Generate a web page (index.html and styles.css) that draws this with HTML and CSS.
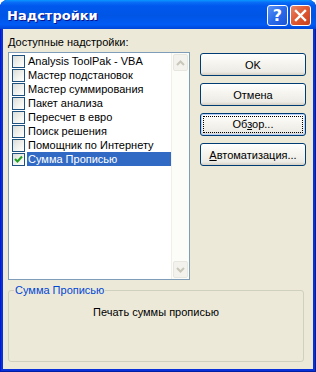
FILE: index.html
```html
<!DOCTYPE html>
<html lang="ru">
<head>
    <meta charset="UTF-8">
    <title>Надстройки</title>
    <link rel="stylesheet" href="styles.css">
</head>
<body>
    <div class="window">
        <div class="titlebar">
            <span class="title">Надстройки</span>
            <div class="title-buttons">
                <button class="tb-btn tb-help">?</button>
                <button class="tb-btn tb-close">
                    <svg width="13" height="13" viewBox="0 0 13 13">
                        <path d="M2 2 L11 11 M11 2 L2 11" stroke="#fff" stroke-width="2.4" stroke-linecap="square"/>
                    </svg>
                </button>
            </div>
        </div>

        <div class="client">
            <div class="caption"><u>Д</u>оступные надстройки:</div>

            <div class="main">
                <div class="listbox">
                    <ul class="items">
                        <li class="item"><span class="check"></span><span class="name">Analysis ToolPak - VBA</span></li>
                        <li class="item"><span class="check"></span><span class="name">Мастер подстановок</span></li>
                        <li class="item"><span class="check"></span><span class="name">Мастер суммирования</span></li>
                        <li class="item"><span class="check"></span><span class="name">Пакет анализа</span></li>
                        <li class="item"><span class="check"></span><span class="name">Пересчет в евро</span></li>
                        <li class="item"><span class="check"></span><span class="name">Поиск решения</span></li>
                        <li class="item"><span class="check"></span><span class="name">Помощник по Интернету</span></li>
                        <li class="item selected">
                            <span class="check">
                                <svg width="11" height="11" viewBox="0 0 11 11">
                                    <path d="M2 5 L4.5 7.5 L9 2.5" fill="none" stroke="#21a121" stroke-width="2"/>
                                </svg>
                            </span>
                            <span class="name">Сумма Прописью</span>
                        </li>
                    </ul>
                    <div class="scrollbar">
                        <div class="sb-btn">
                            <svg width="9" height="6" viewBox="0 0 9 6"><path d="M1 5 L4.5 1.5 L8 5" fill="none" stroke="#c9c7ba" stroke-width="2"/></svg>
                        </div>
                        <div class="sb-track"></div>
                        <div class="sb-btn">
                            <svg width="9" height="6" viewBox="0 0 9 6"><path d="M1 1 L4.5 4.5 L8 1" fill="none" stroke="#c9c7ba" stroke-width="2"/></svg>
                        </div>
                    </div>
                </div>

                <div class="actions">
                    <button class="btn">OK</button>
                    <button class="btn">Отмена</button>
                    <button class="btn focused"><span class="focus">Об<u>з</u>ор...</span></button>
                    <button class="btn"><u>А</u>втоматизация...</button>
                </div>
            </div>

            <fieldset class="group">
                <legend>Сумма Прописью</legend>
                <div class="description">Печать суммы прописью</div>
            </fieldset>
        </div>
    </div>
</body>
</html>
```

FILE: styles.css
```css
body {
    margin: 0;
    font-family: "Liberation Sans", Arial, sans-serif;
    font-size: 11px;
}
.window {
    width: 316px;
    height: 372px;
    display: flex;
    flex-direction: column;
    background: #0831d9;
    border-radius: 8px 8px 0 0;
    box-sizing: border-box;
    padding: 0 3px 3px 3px;
    box-shadow: inset 1px 0 #0019cf, inset -1px 0 #001ea0, inset 0 -1px #001ea0;
}
.titlebar {
    height: 29px;
    margin: 0 -3px;
    padding: 0 5px 0 7px;
    display: flex;
    align-items: center;
    justify-content: space-between;
    border-radius: 7px 7px 0 0;
    background: linear-gradient(to bottom, #0997ff 0%, #0a6ef8 8%, #0058ee 20%, #0055e5 55%, #005bf5 85%, #0045d8 100%);
}
.title {
    color: #fff;
    font: bold 13px "DejaVu Sans", sans-serif;
    text-shadow: 1px 1px #0f1089;
    padding-top: 1px;
}
.title-buttons {
    display: flex;
    gap: 2px;
    padding-top: 2px;
}
.tb-btn {
    width: 21px;
    height: 21px;
    padding: 0;
    border: 1px solid #fff;
    border-radius: 3px;
    display: flex;
    align-items: center;
    justify-content: center;
}
.tb-help {
    background: linear-gradient(135deg, #5d93f5 0%, #2a6aea 50%, #1b54d8 100%);
    color: #fff;
    font: bold 16px "DejaVu Sans", sans-serif;
}
.tb-close {
    background: linear-gradient(135deg, #e8856a 0%, #e05a33 45%, #c9401c 100%);
}
.client {
    flex: 1;
    background: #ece9d8;
    padding: 7px 7px 0 5px;
}
.caption {
    line-height: 13px;
}
.main {
    display: flex;
    gap: 10px;
    margin-top: 3px;
}
.listbox {
    width: 182px;
    height: 228px;
    box-sizing: border-box;
    border: 1px solid #7f9db9;
    background: #fff;
    display: flex;
}
.items {
    flex: 1;
    list-style: none;
    margin: 0;
    padding: 1px 0 0 0;
}
.item {
    height: 14px;
    display: flex;
    align-items: center;
    padding-left: 3px;
}
.check {
    width: 11px;
    height: 11px;
    border: 1px solid #1c5180;
    background: linear-gradient(135deg, #dcdcd7 0%, #f3f3f0 60%, #fff 100%);
    display: flex;
    align-items: center;
    justify-content: center;
    flex-shrink: 0;
}
.name {
    margin-left: 2px;
    padding: 0 1px;
    line-height: 14px;
    white-space: nowrap;
}
.selected .name {
    flex: 1;
    background: #316ac5;
    color: #fff;
}
.scrollbar {
    width: 17px;
    display: flex;
    flex-direction: column;
    background: #fcfcf9;
    border-left: 1px solid #f0efe8;
}
.sb-btn {
    height: 15px;
    margin: 1px;
    border: 1px solid #e8e7df;
    border-radius: 2px;
    background: #f3f2ec;
    display: flex;
    align-items: center;
    justify-content: center;
}
.sb-track {
    flex: 1;
}
.actions {
    display: flex;
    flex-direction: column;
    gap: 7px;
    padding-top: 1px;
}
.btn {
    width: 106px;
    height: 23px;
    padding: 0;
    border: 1px solid #003c74;
    border-radius: 3px;
    background: linear-gradient(to bottom, #fff 0%, #f6f5f0 40%, #ecebe5 85%, #d6d0c5 100%);
    font: 11px "Liberation Sans", Arial, sans-serif;
    color: #000;
}
.focused {
    box-shadow: inset 0 0 0 1px #b9d1f8;
    padding: 2px;
}
.focus {
    display: block;
    height: 100%;
    box-sizing: border-box;
    border: 1px dotted #000;
    line-height: 15px;
}
.group {
    margin: 4px 2px 0 0;
    padding: 0;
    height: 78px;
    box-sizing: border-box;
    border: 1px solid #d0d0bf;
    border-radius: 3px;
}
.group legend {
    margin-left: 5px;
    padding: 0 1px;
    color: #0046d5;
    line-height: 13px;
}
.description {
    text-align: center;
    padding-top: 9px;
}
```
